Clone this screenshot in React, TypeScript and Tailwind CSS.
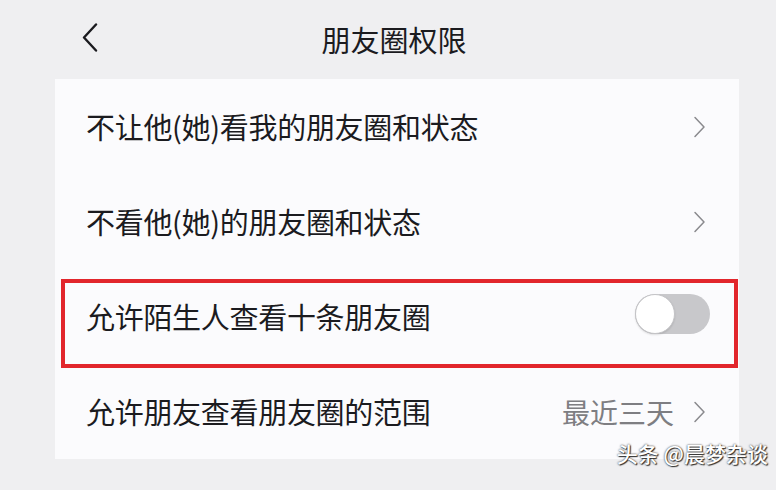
const font = { fontFamily: '"Noto Sans CJK SC", "Noto Sans", sans-serif' };

function ChevronRight() {
  return (
    <svg width="13" height="22" viewBox="0 0 13 22" fill="none" className="shrink-0">
      <path d="M2 1.5 L11 11 L2 20.5" stroke="#8a8a8e" strokeWidth="1.5" strokeLinecap="round" strokeLinejoin="round" />
    </svg>
  );
}

function Toggle() {
  return (
    <div className="relative w-[75px] h-[40px] rounded-full bg-[#c8c8cb]">
      <div className="absolute left-0 top-0 w-[40px] h-[40px] rounded-full bg-white border border-[#c4c4c7] shadow-[0_1px_2px_rgba(0,0,0,0.12)]" />
    </div>
  );
}

interface RowProps {
  label: string;
  value?: string;
  toggle?: boolean;
}

function Row({ label, value, toggle }: RowProps) {
  return (
    <div className="relative h-[95px] flex items-center pl-[31px] pr-[33px]">
      <span className="flex-1 text-[29px] text-[#1b1b1f] tracking-[-0.3px]">{label}</span>
      {value && <span className="text-[28px] text-[#7e7e82] mr-[19px]">{value}</span>}
      {toggle ? <div className="-mr-[4px] -mt-[6px]"><Toggle /></div> : <ChevronRight />}
    </div>
  );
}

export default function App() {
  return (
    <div style={font} className="relative w-[776px] h-[490px] overflow-hidden bg-[#efeff1]">
      <div className="ml-[55px] w-[684px] h-[79px] flex items-center relative">
        <svg width="16" height="30" viewBox="0 0 16 30" fill="none" className="absolute left-[27px] top-[23px]">
          <path d="M14 1.5 L2 14.5 L14 27.5" stroke="#1b1b1f" strokeWidth="2.4" strokeLinecap="round" strokeLinejoin="round" />
        </svg>
        <div className="flex-1 text-center text-[29px] text-[#1b1b1f] pr-[6px]">朋友圈权限</div>
      </div>

      <div className="ml-[55px] w-[684px] bg-[#fbfbfd]">
        <Row label="不让他(她)看我的朋友圈和状态" />
        <Row label="不看他(她)的朋友圈和状态" />
        <div className="relative">
          <Row label="允许陌生人查看十条朋友圈" toggle />
          <div className="absolute left-[6px] top-[10px] w-[677px] h-[89px] border-[4px] border-[#e2262c] pointer-events-none" />
        </div>
        <Row label="允许朋友查看朋友圈的范围" value="最近三天" />
      </div>

      <div className="absolute right-[8px] top-[438px] text-[21px] text-white font-medium [text-shadow:0_0_2px_#222,1px_1px_1px_#333]">
        头条 @晨梦杂谈
      </div>
    </div>
  );
}
